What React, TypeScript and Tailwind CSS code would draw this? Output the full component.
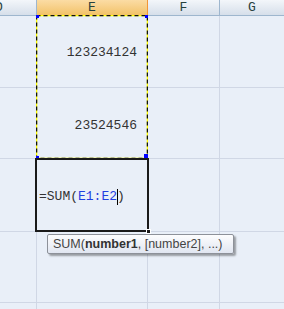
import React from 'react';

const mono = { fontFamily: '"Liberation Mono", "DejaVu Sans Mono", monospace' };

export default function App() {
    const rows = [72, 71, 73, 71, 20];

    return (
        <div className="relative w-[284px] h-[309px] overflow-hidden bg-[#e9eff8] text-[13px]" style={mono}>
            {/* column headers */}
            <div className="flex h-[16px] border-b border-[#9eb6ce]">
                <div className="w-[37px] border-r border-[#9eb6ce] bg-gradient-to-b from-[#f3f6fa] to-[#d6dfea] flex items-center justify-start overflow-hidden">
                    <span className="text-[#27413e] -ml-[5px] leading-none">D</span>
                </div>
                <div className="w-[111px] border-r border-[#f29536] bg-gradient-to-b from-[#fbdca4] to-[#f2c267] flex items-center justify-center">
                    <span className="text-[#27413e] leading-none">E</span>
                </div>
                <div className="w-[72px] border-r border-[#9eb6ce] bg-gradient-to-b from-[#f3f6fa] to-[#d6dfea] flex items-center justify-center">
                    <span className="text-[#27413e] leading-none">F</span>
                </div>
                <div className="flex-1 bg-gradient-to-b from-[#f3f6fa] to-[#d6dfea] flex items-center justify-center">
                    <span className="text-[#27413e] leading-none">G</span>
                </div>
            </div>

            {/* grid rows */}
            {rows.map((h, i) => (
                <div key={i} className="flex border-b border-[#d0d7e5]" style={{ height: h }}>
                    <div className="w-[37px] border-r border-[#d0d7e5]" />
                    <div className="w-[111px] border-r border-[#d0d7e5] flex items-center justify-end pr-[10px] text-[#333]">
                        {i === 0 && <span className="translate-y-[1px]">123234124</span>}
                        {i === 1 && <span className="translate-y-[3px]">23524546</span>}
                    </div>
                    <div className="w-[72px] border-r border-[#d0d7e5]" />
                    <div className="flex-1" />
                </div>
            ))}

            {/* copy selection (marching ants) */}
            <svg className="absolute left-[36px] top-[15px]" width="112" height="144">
                <rect x="0.5" y="0.5" width="111" height="143" fill="none" stroke="#ffff00" strokeWidth="1.5" />
                <rect x="0.5" y="0.5" width="111" height="143" fill="none" stroke="#111" strokeWidth="1.5" strokeDasharray="4 3" />
                <rect x="0" y="0" width="3" height="3" fill="#0000ff" />
                <rect x="109" y="0" width="3" height="3" fill="#0000ff" />
                <rect x="0" y="141" width="3" height="3" fill="#0000ff" />
                <rect x="108" y="139" width="4" height="5" fill="#0000ff" />
            </svg>

            {/* editing cell */}
            <div className="absolute left-[35px] top-[158px] w-[114px] h-[74px] border-2 border-[#1a1a1a] flex items-center pl-[2px] text-[#333]">
                <span className="translate-y-[2px] whitespace-nowrap">
                    =SUM(<span className="text-[#1f3fe0]">E1:E2</span>
                    <span className="inline-block w-px h-[16px] bg-black align-middle -mx-[0.5px]" />)
                </span>
                <div className="absolute -right-[4px] -bottom-[4px] w-[5px] h-[5px] bg-[#1a1a1a] border border-white" />
            </div>

            {/* function tooltip */}
            <div
                className="absolute left-[47px] top-[234px] w-[187px] h-[20px] border border-[#8d9199] rounded-[2px] bg-gradient-to-b from-[#fdfdfe] to-[#e1e6f1] shadow-[2px_2px_2px_rgba(0,0,0,0.35)] flex items-center pl-[5px] text-[12.5px] text-[#444] whitespace-nowrap"
                style={{ fontFamily: '"Liberation Sans", Arial, sans-serif' }}
            >
                SUM(<b className="text-[#333]">number1</b>, [number2], ...)
            </div>
        </div>
    );
}
